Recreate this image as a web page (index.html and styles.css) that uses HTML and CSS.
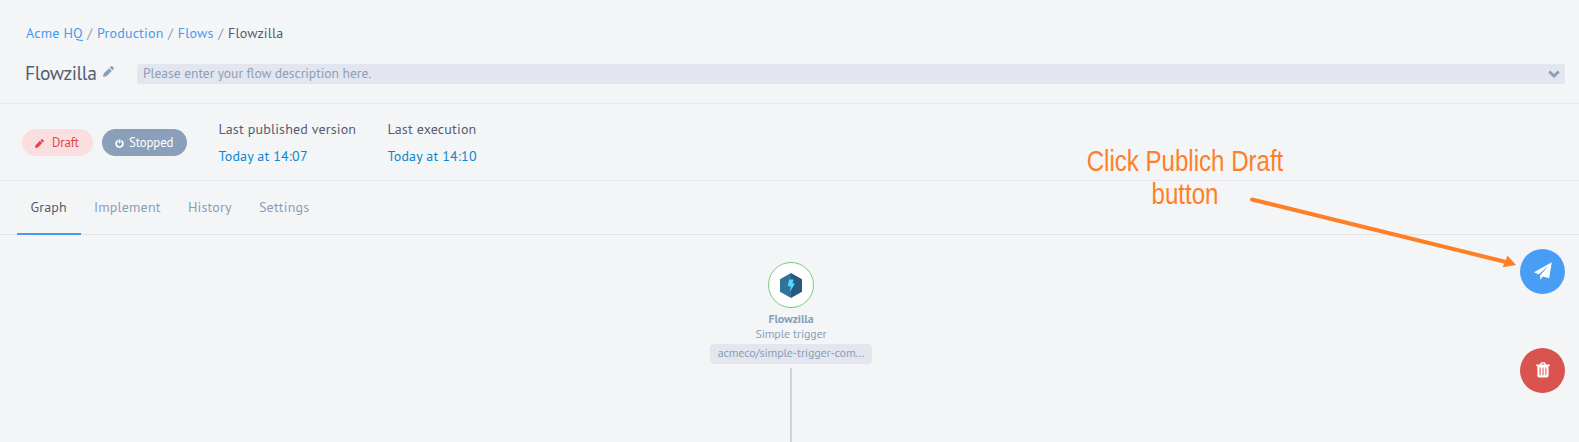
FILE: index.html
```html
<!DOCTYPE html>
<html lang="en">
<head>
<meta charset="utf-8">
<title>Flowzilla</title>
<link rel="stylesheet" href="styles.css">
</head>
<body>
<main class="page">
  <header class="head">
    <nav class="crumbs"><a>Acme HQ</a><i>/</i><a>Production</a><i>/</i><a>Flows</a><i>/</i><span>Flowzilla</span></nav>
    <div class="title-row">
      <h1>Flowzilla</h1>
      <svg class="pencil" viewBox="0 0 12 12"><path d="M0 12l.8-3.8L6.6 2.4l3 3L3.8 11.2zM7.4 1.6L8.6.4q.7-.7 1.4 0L11.600 2q.7.7 0 1.400l-1.200 1.200z"/></svg>
      <div class="desc"><span>Please enter your flow description here.</span>
        <svg class="chev" viewBox="0 0 12 8"><path d="M1.200 1.500L6 6l4.800-4.500"/></svg></div>
    </div>
  </header>
  <section class="status">
    <span class="pill draft"><svg viewBox="0 0 12 12"><path d="M0 12l.8-3.8L6.6 2.4l3 3L3.8 11.2zM7.4 1.6L8.6.4q.7-.7 1.4 0L11.600 2q.7.7 0 1.400l-1.200 1.200z"/></svg>Draft</span>
    <span class="pill stopped"><svg viewBox="0 0 10 10"><path d="M3 1.900a3.800 3.800 0 1 0 4 0M5 .4v4.200"/></svg>Stopped</span>
    <dl class="published"><dt>Last published version</dt><dd>Today at 14:07</dd></dl>
    <dl class="executed"><dt>Last execution</dt><dd>Today at 14:10</dd></dl>
  </section>
  <nav class="tabs"><a class="active">Graph</a><a class="implement">Implement</a><a class="history">History</a><a>Settings</a></nav>
  <section class="graph">
    <div class="node">
      <div class="disc"><svg viewBox="0 0 22 25"><path fill="#31729b" d="M11 0L0 6.200v12.500L11 25z"/><path fill="#265b7e" d="M11 0l11 6.200v12.500L11 25z"/><path fill="#4ddcff" d="M9.200 6.500h4.500l-1.200 4h2.600L9.700 19l1.200-5.700H7.700z"/></svg></div>
      <b>Flowzilla</b>
      <span class="kind">Simple trigger</span>
      <span class="component">acmeco/simple-trigger-com...</span>
      <div class="edge"></div>
    </div>
    <div class="actions">
      <button class="publish" aria-label="Publish"><svg viewBox="0 0 18 18"><path d="M17.800.2L0 10.300l4.600 2.100L15 3.500 6.200 13.200v4.600l2.700-3.300 6.300 1.800z"/></svg></button>
      <button class="delete" aria-label="Delete"><svg viewBox="0 0 14 16"><path fill-rule="evenodd" d="M4 2.500L4.700.8Q5 .2 5.600.2h2.800q.6 0 .9.6L10 2.500h3.800V4h-1.200v9.600q0 2-1.700 2H3.100q-1.700 0-1.700-2V4H.2V2.500zM5.500 2.500h3L8.100 1.400H5.900zM3.600 5.500v7.800h1V5.500zM6.500 5.500v7.800h1V5.500zM9.400 5.500v7.800h1V5.500z"/></svg></button>
    </div>
  </section>
  <p class="note">Click Publich Draft<br>button</p>
  <svg class="arrow" viewBox="0 0 280 80"><path class="shaft" d="M12 9.500L264 71.500"/><path class="tip" d="M276 75L262.700 77.300l4.800-11.800z"/></svg>
</main>
</body>
</html>
```
FILE: styles.css
```css
* { box-sizing: border-box; }
body { margin: 0; background: #f4f5f7; font-family: "PT Sans", "Noto Sans", sans-serif; font-size: 14px; letter-spacing: .17px; color: #545d6e; }
.page { position: relative; height: 442px; overflow: hidden; }
svg { display: block; flex: none; }
.head { height: 104px; border-bottom: 1px solid #e6e8eb; padding: 23px 14px 0 25px; }
.crumbs { display: flex; height: 20px; line-height: 20px; padding-left: 1px; }
.crumbs a { color: #489bee; }
.crumbs i { font-style: normal; width: 14.4px; text-align: center; color: #929cac; }
.title-row { display: flex; margin-top: 21px; height: 20px; }
h1 { margin: 0; width: 78px; font-size: 19.5px; font-weight: 400; line-height: 18px; letter-spacing: -.4px; white-space: nowrap; }
.pencil { width: 11px; height: 11px; margin-top: 2px; fill: #8a9fba; }
.desc { flex: 1; margin-left: 23px; padding: 0 5px 0 6px; display: flex; justify-content: space-between; line-height: 18px; font-size: 13.5px; letter-spacing: 0; background: #e3e6ee; border-radius: 3px; color: #8a9fba; }
.chev { width: 12px; height: 8px; margin-top: 6px; fill: none; stroke: #8a9fba; stroke-width: 2.8; }
.status { height: 77px; border-bottom: 1px solid #e6e8eb; display: flex; padding: 15px 0 0 22px; }
.pill { display: flex; align-items: center; height: 27px; line-height: 27px; margin-top: 10px; border-radius: 14px; font-size: 12.8px; letter-spacing: -.1px; }
.pill svg { width: 9px; height: 9px; margin-top: 1px; }
.draft { width: 71px; padding-left: 13px; gap: 8px; background: #fbdfe0; color: #e04347; fill: currentColor; }
.stopped { width: 85px; margin-left: 9px; padding-left: 13px; gap: 5px; background: #8a9fba; color: #fff; }
.stopped svg { fill: none; stroke: #fff; stroke-width: 1.9; }
dl { margin: 0; line-height: 20px; }
dd { margin: 7px 0 0; color: #0888d1; }
.published { margin-left: 31.6px; width: 169px; }
.tabs { height: 54px; border-bottom: 1px solid #e2e4e8; display: flex; padding-left: 17px; line-height: 52px; color: #8a9fba; }
.tabs .active { width: 64px; height: 54px; padding-left: 13.5px; border-bottom: 2px solid #489bee; color: #545d6e; }
.implement { margin-left: 13px; width: 94px; }
.history { width: 71px; }
.graph { height: 207px; position: relative; display: flex; justify-content: center; padding-top: 27px; }
.node { display: flex; flex-direction: column; align-items: center; width: 162px; margin-left: 3px; color: #8a9fba; font-size: 12px; letter-spacing: -.14px; line-height: 15px; }
.disc { width: 46px; height: 46px; flex: none; border: 1px solid #78cb7d; border-radius: 50%; background: #fff; display: grid; place-items: center; }
.disc svg { width: 22px; height: 25px; }
.node b { margin-top: 3px; }
.component { width: 162px; height: 20px; line-height: 18px; margin-top: 3px; background: #e3e6ee; border-radius: 4px; text-align: center; }
.edge { width: 2px; flex: 1; margin-top: 4px; background: #cbd2df; }
.actions { position: absolute; right: 14px; top: 14px; display: flex; flex-direction: column; gap: 54px; }
.actions button { width: 45px; height: 45px; border: 0; border-radius: 50%; padding: 0; display: grid; place-items: center; }
.actions svg { fill: #fff; }
.publish { background: #489df5; }
.publish svg { width: 18px; height: 18px; transform: translateY(-1px); }
.delete { background: #d9534f; }
.delete svg { width: 14px; height: 16px; transform: translateY(-1px); }
.note { position: absolute; left: 1065px; top: 145px; width: 240px; margin: 0; text-align: center; font: 29px/33px "Liberation Sans", Arial, sans-serif; letter-spacing: 0; color: #ff7f27; transform: scaleX(.83); white-space: nowrap; }
.arrow { position: absolute; left: 1240px; top: 190px; width: 280px; height: 80px; }
.shaft { stroke: #ff7f27; stroke-width: 4; stroke-linecap: round; }
.tip { fill: #ff7f27; }
```
